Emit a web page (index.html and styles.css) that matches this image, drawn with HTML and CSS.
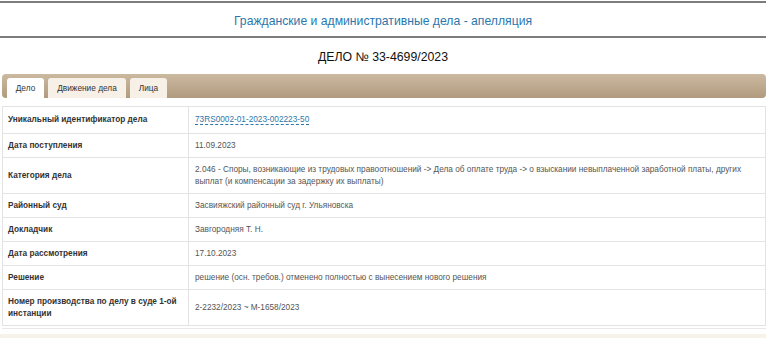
FILE: index.html
```html
<!DOCTYPE html>
<html lang="ru">
<head>
    <meta charset="UTF-8">
    <meta name="viewport" content="width=device-width, initial-scale=1.0">
    <title>ДЕЛО № 33-4699/2023</title>
    <link rel="stylesheet" href="styles.css">
</head>
<body>
    <div id="page">
        <div class="header">
            <h1 class="header-title">Гражданские и административные дела - апелляция</h1>
        </div>

        <h2 class="case-number">ДЕЛО № 33-4699/2023</h2>

        <div class="tabs">
            <ul class="tab-bar">
                <li class="tab active">Дело</li>
                <li class="tab">Движение дела</li>
                <li class="tab">Лица</li>
            </ul>

            <div class="tab-panel">
                <table class="case-info">
                    <tr class="first">
                        <th>Уникальный идентификатор дела</th>
                        <td><a class="uid" href="#">73RS0002-01-2023-002223-50</a></td>
                    </tr>
                    <tr>
                        <th>Дата поступления</th>
                        <td>11.09.2023</td>
                    </tr>
                    <tr>
                        <th>Категория дела</th>
                        <td>2.046 - Споры, возникающие из трудовых правоотношений -&gt; Дела об оплате труда -&gt; о взыскании невыплаченной заработной платы, других выплат (и компенсации за задержку их выплаты)</td>
                    </tr>
                    <tr>
                        <th>Районный суд</th>
                        <td>Засвияжский районный суд г. Ульяновска</td>
                    </tr>
                    <tr>
                        <th>Докладчик</th>
                        <td>Завгородняя Т. Н.</td>
                    </tr>
                    <tr>
                        <th>Дата рассмотрения</th>
                        <td>17.10.2023</td>
                    </tr>
                    <tr>
                        <th>Решение</th>
                        <td>решение (осн. требов.) отменено полностью с вынесением нового решения</td>
                    </tr>
                    <tr>
                        <th>Номер производства по делу в суде 1-ой инстанции</th>
                        <td>2-2232/2023 ~ М-1658/2023</td>
                    </tr>
                </table>
            </div>
        </div>

        <div class="footer-strip"></div>
    </div>
</body>
</html>
```

FILE: styles.css
```css
body {
    margin: 0;
    background: #fff;
    font-family: "Liberation Sans", Arial, sans-serif;
    color: #333;
}

#page {
    width: 766px;
}

.header {
    margin-top: 1px;
    border-top: 2px solid #7d7d7d;
    border-bottom: 2px solid #7d7d7d;
    height: 30px;
    padding-top: 3px;
    display: flex;
    align-items: center;
    justify-content: center;
}

.header-title {
    margin: 0;
    font-size: 12.2px;
    font-weight: normal;
    color: #2b77ad;
}

.case-number {
    margin: 0;
    height: 36px;
    padding-top: 1px;
    box-sizing: border-box;
    display: flex;
    align-items: center;
    justify-content: center;
    font-size: 12.3px;
    font-weight: normal;
    color: #111;
}

.tabs {
    margin-left: 2px;
}

.tab-bar {
    list-style: none;
    margin: 0;
    padding: 4px 0 0 5px;
    height: 20px;
    display: flex;
    gap: 4px;
    border-radius: 4px;
    background: linear-gradient(#cbb9a0, #b19b7e);
}

.tab {
    width: 37px;
    height: 20px;
    display: flex;
    align-items: center;
    justify-content: center;
    font-size: 8.3px;
    color: #333;
    background: #f6f0e7;
    border-radius: 3px 3px 0 0;
}

.tab:nth-child(2) {
    width: 78px;
}

.tab.active {
    background: #fff;
}

.tab-panel {
    padding-top: 8px;
    border-bottom: 1px solid #e8e8e8;
    padding-bottom: 2px;
}

.case-info {
    width: 764px;
    border-collapse: collapse;
    border: 1px solid #e3e3e3;
    font-size: 8.25px;
    line-height: 12px;
}

.case-info th,
.case-info td {
    padding: 5.5px 5px;
    border-top: 1px solid #e3e3e3;
    text-align: left;
    vertical-align: middle;
}

.case-info th {
    width: 175px;
    font-weight: bold;
    color: #333;
    border-right: 1px solid #e3e3e3;
}

.case-info td {
    padding-left: 6px;
    color: #555;
}

.case-info tr.first th,
.case-info tr.first td {
    padding-top: 7px;
    padding-bottom: 7px;
}

.uid {
    color: #2b77ad;
    text-decoration: none;
    border-bottom: 1px dashed #2b77ad;
}

.footer-strip {
    margin-top: 5px;
    height: 10px;
    background: #f7f2ea;
}
```
